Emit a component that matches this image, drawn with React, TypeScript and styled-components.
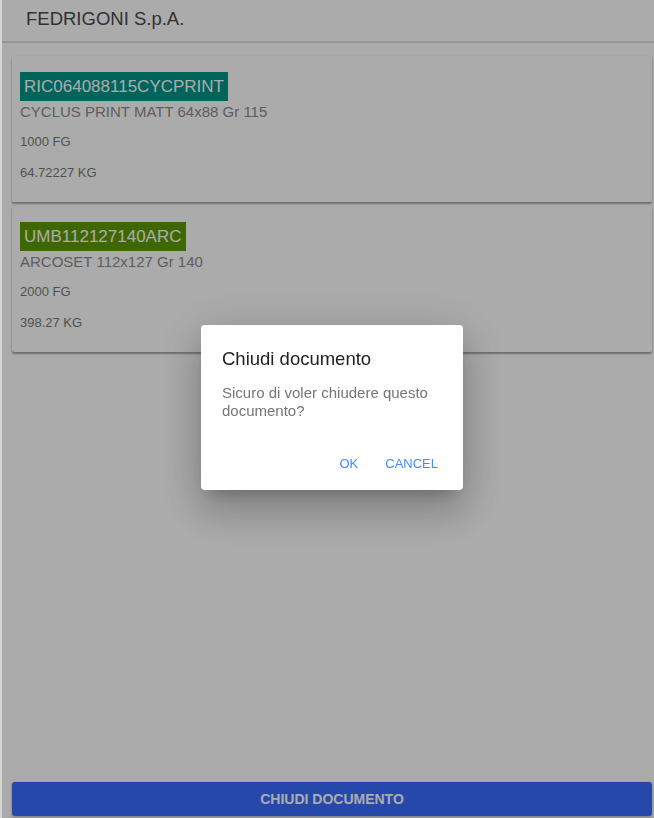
import React from "react";
import styled, { createGlobalStyle } from "styled-components";

interface Item {
	code: string;
	color: string;
	description: string;
	sheets: string;
	weight: string;
}

const items: Item[] = [
	{
		code: "RIC064088115CYCPRINT",
		color: "#009688",
		description: "CYCLUS PRINT MATT 64x88 Gr 115",
		sheets: "1000 FG",
		weight: "64.72227 KG",
	},
	{
		code: "UMB112127140ARC",
		color: "#5e9a00",
		description: "ARCOSET 112x127 Gr 140",
		sheets: "2000 FG",
		weight: "398.27 KG",
	},
];

const GlobalStyle = createGlobalStyle`
	html, body {
		margin: 0;
		padding: 0;
		background: #d6d6d6;
		font-family: "Liberation Sans", Arial, sans-serif;
	}
`;

const App = () => {
	return (
		<React.Fragment>
			<GlobalStyle />
			<Page>
				<Header>FEDRIGONI S.p.A.</Header>
				<CardList>
					{items.map((item) => (
						<Card key={item.code}>
							<Code color={item.color}>{item.code}</Code>
							<Description>{item.description}</Description>
							<Detail>{item.sheets}</Detail>
							<Detail>{item.weight}</Detail>
						</Card>
					))}
				</CardList>
				<CloseButton>CHIUDI DOCUMENTO</CloseButton>
			</Page>
			<Backdrop>
				<Dialog>
					<DialogTitle>Chiudi documento</DialogTitle>
					<DialogBody>Sicuro di voler chiudere questo documento?</DialogBody>
					<DialogActions>
						<TextButton>OK</TextButton>
						<TextButton>CANCEL</TextButton>
					</DialogActions>
				</Dialog>
			</Backdrop>
		</React.Fragment>
	);
};

const Page = styled.div`
	min-height: 100vh;
	box-sizing: border-box;
	margin-left: 2px;
	background: #ffffff;
	display: flex;
	flex-direction: column;
	padding-bottom: 2px;
`;
const Header = styled.header`
	height: 43px;
	box-sizing: border-box;
	padding: 8px 0 0 24px;
	font-size: 18.5px;
	line-height: 22px;
	color: #4a4a4a;
	border-bottom: 2px solid #e0e0e0;
`;
const CardList = styled.div`
	flex: 1;
	display: flex;
	flex-direction: column;
	gap: 4px;
	padding: 13px 2px 0 10px;
`;
const Card = styled.div`
	background: #ffffff;
	height: 146px;
	box-sizing: border-box;
	padding: 16px 8px 0 8px;
	border-radius: 2px;
	box-shadow: 0 2px 2px rgba(0, 0, 0, 0.35), 0 0 2px rgba(0, 0, 0, 0.08);
	display: flex;
	flex-direction: column;
	align-items: flex-start;
`;
const Code = styled.span<{ color: string }>`
	background: ${(p) => p.color};
	color: #ffffff;
	font-size: 17px;
	line-height: 29px;
	padding: 0 4px;
`;
const Description = styled.div`
	font-size: 15px;
	line-height: 20px;
	margin-top: 1px;
	color: #8c8c8c;
`;
const Detail = styled.p`
	font-size: 13px;
	line-height: 20px;
	margin: 10px 0 0;
	color: #7a7a7a;

	& + & {
		margin-top: 11px;
	}
`;
const CloseButton = styled.button`
	margin: 0 2px 0 10px;
	height: 34px;
	border: none;
	border-radius: 3px;
	background: #3a6cff;
	color: #ffffff;
	font-family: "Liberation Sans", Arial, sans-serif;
	font-weight: bold;
	font-size: 14px;
	box-shadow: 0 1px 3px rgba(0, 0, 0, 0.3);
`;
const Backdrop = styled.div`
	position: fixed;
	top: 0;
	left: 2px;
	right: 0;
	bottom: 0;
	background: rgba(0, 0, 0, 0.33);
	display: flex;
	justify-content: center;
	padding: 325px 0 0 8px;
	box-sizing: border-box;
	align-items: flex-start;
`;
const Dialog = styled.div`
	width: 262px;
	box-sizing: border-box;
	background: #ffffff;
	border-radius: 4px;
	padding: 22px 17px 12px 21px;
	box-shadow: 0 11px 15px -7px rgba(0, 0, 0, 0.2), 0 24px 38px 3px rgba(0, 0, 0, 0.14),
		0 9px 46px 8px rgba(0, 0, 0, 0.12);
`;
const DialogTitle = styled.h2`
	margin: 0;
	font-weight: normal;
	font-size: 18.5px;
	line-height: 24px;
	color: #212121;
`;
const DialogBody = styled.p`
	margin: 13px 0 0;
	font-size: 15px;
	line-height: 18px;
	color: #757575;
	padding-right: 6px;
`;
const DialogActions = styled.div`
	display: flex;
	justify-content: flex-end;
	gap: 11px;
	margin-top: 28px;
`;
const TextButton = styled.button`
	border: none;
	background: transparent;
	padding: 0 8px;
	height: 30px;
	font-family: "Liberation Sans", Arial, sans-serif;
	font-size: 13px;
	color: #448aff;
`;

export default App;
